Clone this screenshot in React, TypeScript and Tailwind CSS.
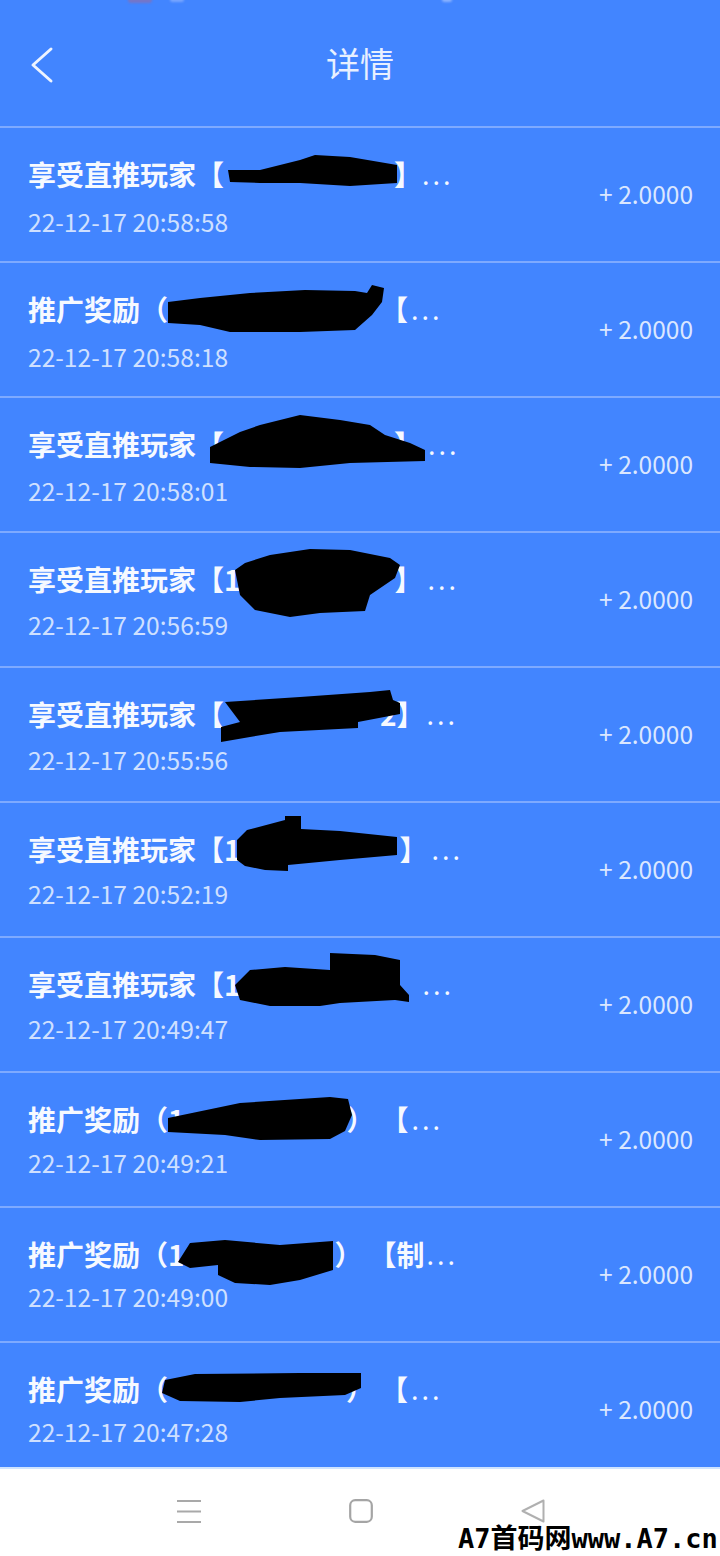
type Row = {
  prefix: string;
  gap: number;
  mid: string;
  gap2?: number;
  tail?: string;
  dotsGap: number;
  dateGap: number;
  time: string;
  blob: string;
};

const rows: Row[] = [
  { prefix: "享受直推玩家【", gap: 170, mid: "】", dotsGap: 0, dateGap: 10, time: "22-12-17 20:58:58", blob: "228,170 260,170 300,160 315,155 350,157 397,165 397,183 350,186 300,183 260,183 230,182" },
  { prefix: "推广奖励（", gap: 212, mid: "【", dotsGap: 3, dateGap: 10, time: "22-12-17 20:58:18", blob: "168,302 200,298 250,293 305,290 355,291 367,293 372,285 384,288 382,302 372,315 355,330 300,332 230,332 200,325 168,323" },
  { prefix: "享受直推玩家【", gap: 170, mid: "】", dotsGap: 6, dateGap: 9, time: "22-12-17 20:58:01", blob: "210,447 240,432 260,425 300,415 340,420 370,425 385,435 410,443 425,450 425,461 350,463 300,468 250,467 210,463" },
  { prefix: "享受直推玩家【1", gap: 154, mid: "】", dotsGap: 5, dateGap: 8, time: "22-12-17 20:56:59", blob: "235,570 245,563 270,555 310,549 350,550 390,558 400,565 395,578 370,595 365,611 320,613 290,617 255,610 240,595" },
  { prefix: "享受直推玩家【", gap: 156, mid: "2】", dotsGap: 2, dateGap: 8, time: "22-12-17 20:55:56", blob: "225,702 300,697 370,692 390,690 393,700 400,703 400,714 358,722 358,728 280,732 250,737 221,742 221,727 240,722" },
  { prefix: "享受直推玩家【1", gap: 159, mid: "】", dotsGap: 4, dateGap: 7, time: "22-12-17 20:52:19", blob: "247,830 285,820 285,816 301,816 301,829 340,831 397,837 397,855 340,860 288,865 288,871 265,870 245,866 237,860 237,840" },
  { prefix: "享受直推玩家【1", gap: 142, mid: "】", dotsGap: 12, dateGap: 7, time: "22-12-17 20:49:47", blob: "330,953 375,955 400,960 400,985 409,995 409,1002 395,1000 340,1003 320,1006 270,1006 240,1000 235,985 250,970 285,967 330,970" },
  { prefix: "推广奖励（1", gap: 162, mid: "）", gap2: 6, tail: "【", dotsGap: 3, dateGap: 6, time: "22-12-17 20:49:21", blob: "168,1118 240,1103 330,1097 348,1099 352,1115 345,1131 330,1139 260,1140 225,1135 168,1132" },
  { prefix: "推广奖励（1", gap: 150, mid: "）", gap2: 6, tail: "【制", dotsGap: 2, dateGap: 5, time: "22-12-17 20:49:00", blob: "190,1243 225,1240 280,1245 333,1241 333,1270 300,1280 270,1285 235,1283 218,1275 218,1265 190,1268 178,1262" },
  { prefix: "推广奖励（", gap: 178, mid: "）", gap2: 6, tail: "【", dotsGap: 3, dateGap: 5, time: "22-12-17 20:47:28", blob: "165,1380 195,1374 300,1373 361,1373 361,1388 345,1395 280,1398 240,1402 180,1401 162,1393" },
];

function ListRow({ row, index }: { row: Row; index: number }) {
  const top = 128 + index * 135;
  return (
    <div className="relative flex h-[135px] shrink-0 items-center justify-between border-b-2 border-[#7eaaff] pl-7 pr-[27px]">
      <div className="flex flex-col self-start pt-[26px]">
        <p className="flex h-10 items-center whitespace-nowrap text-[28px] font-bold leading-10 text-[#f6f9ff]">
          <span>{row.prefix}</span>
          <span className="inline-block shrink-0" style={{ width: row.gap }} />
          <span>{row.mid}</span>
          {row.tail && <span className="inline-block shrink-0" style={{ width: row.gap2 }} />}
          {row.tail && <span>{row.tail}</span>}
          <span className="inline-block shrink-0" style={{ width: row.dotsGap }} />
          <span className="font-['Noto_Sans',sans-serif] font-normal tracking-[3px]">...</span>
        </p>
        <p className="text-[24.6px] leading-[34px] text-[#cfe0ff]" style={{ marginTop: row.dateGap }}>
          {row.time}
        </p>
      </div>
      <span className="mb-[2px] text-[24.5px] leading-8 text-[#dbe7ff]">+ 2.0000</span>
      <svg className="pointer-events-none absolute left-0 top-0 h-[135px] w-[720px]" viewBox={`0 ${top} 720 135`}>
        <polygon points={row.blob} fill="#000" />
      </svg>
    </div>
  );
}

export default function App() {
  return (
    <div className="relative flex h-[1556px] w-[720px] flex-col overflow-hidden bg-white font-['Noto_Sans_CJK_SC','Noto_Sans',sans-serif]">
      <header className="relative flex h-[128px] shrink-0 items-center justify-center border-b-2 border-[#7eaaff] bg-[#4285ff]">
        <span className="absolute left-[128px] top-[-3px] h-[6px] w-[24px] rounded-full bg-[#8a6fb0]/70 blur-[1px]" />
        <span className="absolute left-[170px] top-[-3px] h-[5px] w-[14px] rounded-full bg-[#8fb4ff]/70 blur-[1px]" />
        <span className="absolute left-[442px] top-[-3px] h-[5px] w-[10px] rounded-full bg-[#a9c6ff]/70 blur-[1px]" />
        <svg className="absolute left-[30px] top-[46px]" width="24" height="38" viewBox="0 0 24 38" fill="none" stroke="#eef4ff" strokeWidth="3" strokeLinecap="round" strokeLinejoin="round">
          <path d="M21 3 3 19l18 16" />
        </svg>
        <h1 className="text-[34px] font-normal leading-none text-[#e8f0ff]">详情</h1>
      </header>

      <main className="flex h-[1339px] shrink-0 flex-col overflow-hidden bg-[#4285ff]">
        {rows.map((row, i) => (
          <ListRow key={row.time} row={row} index={i} />
        ))}
      </main>

      <nav className="flex flex-1 items-start justify-center gap-[148px] border-t-2 border-[#cfe4ff] bg-white pl-[2px] pt-[30px]">
        <svg width="24" height="24" viewBox="0 0 24 24" fill="none" stroke="#a9a9a9" strokeWidth="2">
          <path d="M0 2h24M0 12.5h24M0 23h24" />
        </svg>
        <svg width="24" height="24" viewBox="0 0 24 24" fill="none" stroke="#a5a5a5" strokeWidth="2.2">
          <rect x="1.2" y="1.2" width="21.6" height="21.6" rx="5" />
        </svg>
        <svg width="24" height="24" viewBox="0 0 24 24" fill="none" stroke="#b0b0b0" strokeWidth="2" strokeLinejoin="round">
          <path d="M22.5 1.5 1.5 12l21 10.500z" />
        </svg>
      </nav>

      <span className="absolute left-[458px] top-[1523px] whitespace-nowrap font-['DejaVu_Sans_Mono','Noto_Sans_CJK_SC',monospace] text-[27px] font-bold leading-8 text-black">
        A7首码网www.A7.cn
      </span>
    </div>
  );
}
